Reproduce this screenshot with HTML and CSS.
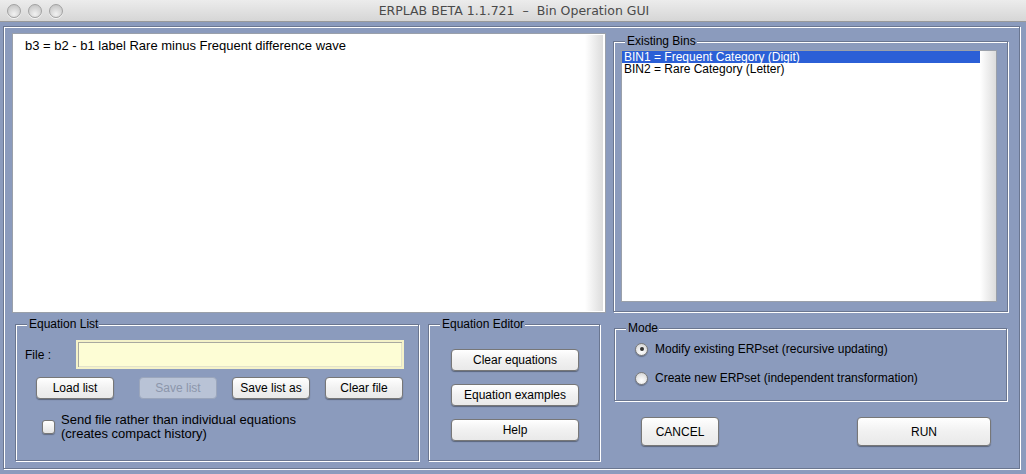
FILE: index.html
```html
<!DOCTYPE html>
<html>
<head>
<meta charset="utf-8">
<link rel="stylesheet" href="styles.css">
<title>Bin Operation GUI</title>
</head>
<body>
<div class="window">
  <div class="titlebar">
    <div class="lights">
      <span class="light"></span><span class="light"></span><span class="light"></span>
    </div>
    <div class="title">ERPLAB BETA 1.1.721  –  Bin Operation GUI</div>
  </div>
  <div class="frame">
    <div class="top-row">
      <div class="editor">
        <div class="editor-text">b3 = b2 - b1 label Rare minus Frequent difference wave</div>
        <div class="gutter"></div>
      </div>
      <div class="panel bins">
        <span class="panel-title">Existing Bins</span>
        <div class="listbox">
          <div class="list-items">
            <div class="item selected">BIN1 = Frequent Category (Digit)</div>
            <div class="item">BIN2 = Rare Category (Letter)</div>
          </div>
          <div class="gutter"></div>
        </div>
      </div>
    </div>
    <div class="bottom-row">
      <div class="panel eqlist">
        <span class="panel-title">Equation List</span>
        <div class="file-row">
          <span class="file-label">File :</span>
          <div class="file-input"></div>
        </div>
        <div class="btn-row">
          <button class="btn btn-list">Load list</button>
          <button class="btn btn-list btn-disabled btn-wide-gap">Save list</button>
          <button class="btn btn-list">Save list as</button>
          <button class="btn btn-list">Clear file</button>
        </div>
        <div class="check-row">
          <span class="checkbox"></span>
          <span class="check-text">Send file rather than individual equations<br>(creates compact history)</span>
        </div>
      </div>
      <div class="panel eqeditor">
        <span class="panel-title">Equation Editor</span>
        <button class="btn btn-ed">Clear equations</button>
        <button class="btn btn-ed">Equation examples</button>
        <button class="btn btn-ed">Help</button>
      </div>
      <div class="right-col">
        <div class="panel mode">
          <span class="panel-title">Mode</span>
          <div class="radio-row"><span class="radio checked"></span><span>Modify existing ERPset (recursive updating)</span></div>
          <div class="radio-row"><span class="radio"></span><span>Create new ERPset (independent transformation)</span></div>
        </div>
        <div class="action-row">
          <button class="btn btn-cancel">CANCEL</button>
          <button class="btn btn-run">RUN</button>
        </div>
      </div>
    </div>
  </div>
</div>
</body>
</html>
```

FILE: styles.css
```css
* { box-sizing: border-box; }
html, body {
  margin: 0;
  padding: 0;
  width: 1026px;
  height: 474px;
  overflow: hidden;
  background: #8b9bbd;
  font-family: "Liberation Sans", Arial, sans-serif;
  font-size: 12px;
  color: #000;
}
.window {
  width: 1026px;
  height: 474px;
  display: flex;
  flex-direction: column;
}
.titlebar {
  height: 22px;
  flex: none;
  position: relative;
  background: linear-gradient(#ececec, #d6d6d6);
  border-bottom: 1px solid #9a9a9a;
  display: flex;
  align-items: center;
}
.lights {
  display: flex;
  gap: 7px;
  padding-left: 7px;
  position: absolute;
  left: 0;
  top: 4px;
}
.light {
  width: 14px;
  height: 14px;
  border-radius: 50%;
  background: radial-gradient(circle at 50% 75%, #f2f2f2 0%, #d2d2d2 60%, #bdbdbd 100%);
  border: 1px solid #a2a2a2;
  box-shadow: 0 1px 0 rgba(255,255,255,0.7);
}
.title {
  width: 100%;
  text-align: center;
  white-space: pre;
  font-family: "DejaVu Sans", "Liberation Sans", sans-serif;
  font-size: 12.5px;
  color: #4a4a4a;
  padding-left: 2px;
}
.frame {
  margin: 4px 6px 4px 3px;
  height: 443px;
  border: 1px solid #6a7690;
  box-shadow: inset 1px 1px 0 #fff, 1px 1px 0 #fff;
  padding: 6px 0 0 8px;
}
.top-row {
  display: flex;
  align-items: flex-start;
}
.editor {
  width: 594px;
  height: 280px;
  background: #fff;
  border: 1px solid #9aa0aa;
  display: flex;
}
.editor-text {
  flex: 1;
  font-size: 13px;
  padding: 4px 0 0 12px;
  line-height: 15px;
}
.gutter {
  width: 18px;
  margin: 1px 2px 1px 0;
  background: linear-gradient(to right, #ffffff, #dcdcdc);
}
.panel {
  position: relative;
  border: 1px solid #6a7690;
  box-shadow: inset 1px 1px 0 #fff, 1px 1px 0 #fff;
}
.panel-title {
  position: absolute;
  top: -8px;
  left: 11px;
  padding: 0 1px 0 2px;
  background: #8b9bbd;
  line-height: 14px;
  font-size: 12px;
}
.bins {
  width: 395px;
  height: 271px;
  margin: 8px 0 0 7px;
  padding: 8px 10px 9px 7px;
}
.listbox {
  width: 100%;
  height: 100%;
  background: #fff;
  border: 1px solid #9aa0aa;
  display: flex;
}
.list-items {
  flex: 1;
  padding-top: 0;
}
.item {
  height: 12px;
  line-height: 12px;
  padding-left: 2px;
  white-space: nowrap;
}
.item.selected {
  background: #2b5fd6;
  color: #fff;
}
.listbox .gutter {
  width: 16px;
  margin: 0;
}
.bottom-row {
  display: flex;
  align-items: flex-start;
  margin-top: 11px;
}
.eqlist {
  width: 404px;
  height: 137px;
  margin-left: 3px;
  padding: 15px 0 0 8px;
}
.file-row {
  display: flex;
  align-items: center;
}
.file-label {
  width: 52px;
  padding-left: 1px;
}
.file-input {
  width: 328px;
  height: 29px;
  background: #fdfdd5;
  border: 2px solid #f4f2c9;
  box-shadow: inset 1px 1px 0 #a9a9a0, inset -1px -1px 0 #e2e2cc;
}
.btn-row {
  display: flex;
  gap: 15px;
  margin: 8px 0 0 12px;
}
.btn {
  font-family: "Liberation Sans", Arial, sans-serif;
  font-size: 12px;
  color: #000;
  background: linear-gradient(#ffffff, #f1f1f1 50%, #e9e9e9);
  border: 1px solid #777;
  border-radius: 4px;
  box-shadow: 0 1px 1px rgba(0,0,0,0.35);
  padding: 0;
  display: flex;
  align-items: center;
  justify-content: center;
}
.btn-list {
  width: 78px;
  height: 22px;
}
.btn-wide-gap { margin-left: 10px; }
.btn-disabled {
  background: #b9c3d6;
  border-color: #9ba6bc;
  color: #8c96ab;
  box-shadow: none;
}
.check-row {
  display: flex;
  align-items: flex-start;
  margin: 14px 0 0 18px;
}
.checkbox {
  width: 13px;
  height: 14px;
  margin-top: 7px;
  border: 1px solid #777;
  border-radius: 3px;
  background: linear-gradient(#ffffff, #e4e4e4);
  box-shadow: 0 1px 1px rgba(0,0,0,0.3);
  flex: none;
}
.check-text {
  font-size: 13px;
  line-height: 14px;
  margin-left: 6px;
}
.eqeditor {
  width: 172px;
  height: 137px;
  margin-left: 9px;
  padding: 24px 0 0 22px;
  display: flex;
  flex-direction: column;
  gap: 13px;
}
.btn-ed {
  width: 128px;
  height: 22px;
}
.right-col {
  width: 393px;
  margin-left: 14px;
}
.mode {
  height: 73px;
  margin-top: 4px;
  padding: 13px 0 0 20px;
  display: flex;
  flex-direction: column;
  gap: 15px;
}
.radio-row {
  display: flex;
  align-items: center;
  gap: 7px;
  height: 14px;
}
.radio {
  width: 13px;
  height: 13px;
  border-radius: 50%;
  border: 1px solid #7a7a7a;
  background: radial-gradient(circle at 50% 70%, #ffffff 0%, #e6e6e6 55%, #c9c9c9 100%);
  box-shadow: 0 1px 1px rgba(0,0,0,0.3);
  position: relative;
  flex: none;
}
.radio.checked::after {
  content: "";
  position: absolute;
  left: 3.5px;
  top: 3.5px;
  width: 4px;
  height: 4px;
  border-radius: 50%;
  background: #333;
}
.action-row {
  display: flex;
  justify-content: space-between;
  margin: 16px 16px 0 27px;
}
.btn-cancel {
  width: 78px;
  height: 29px;
}
.btn-run {
  width: 134px;
  height: 29px;
}
```
